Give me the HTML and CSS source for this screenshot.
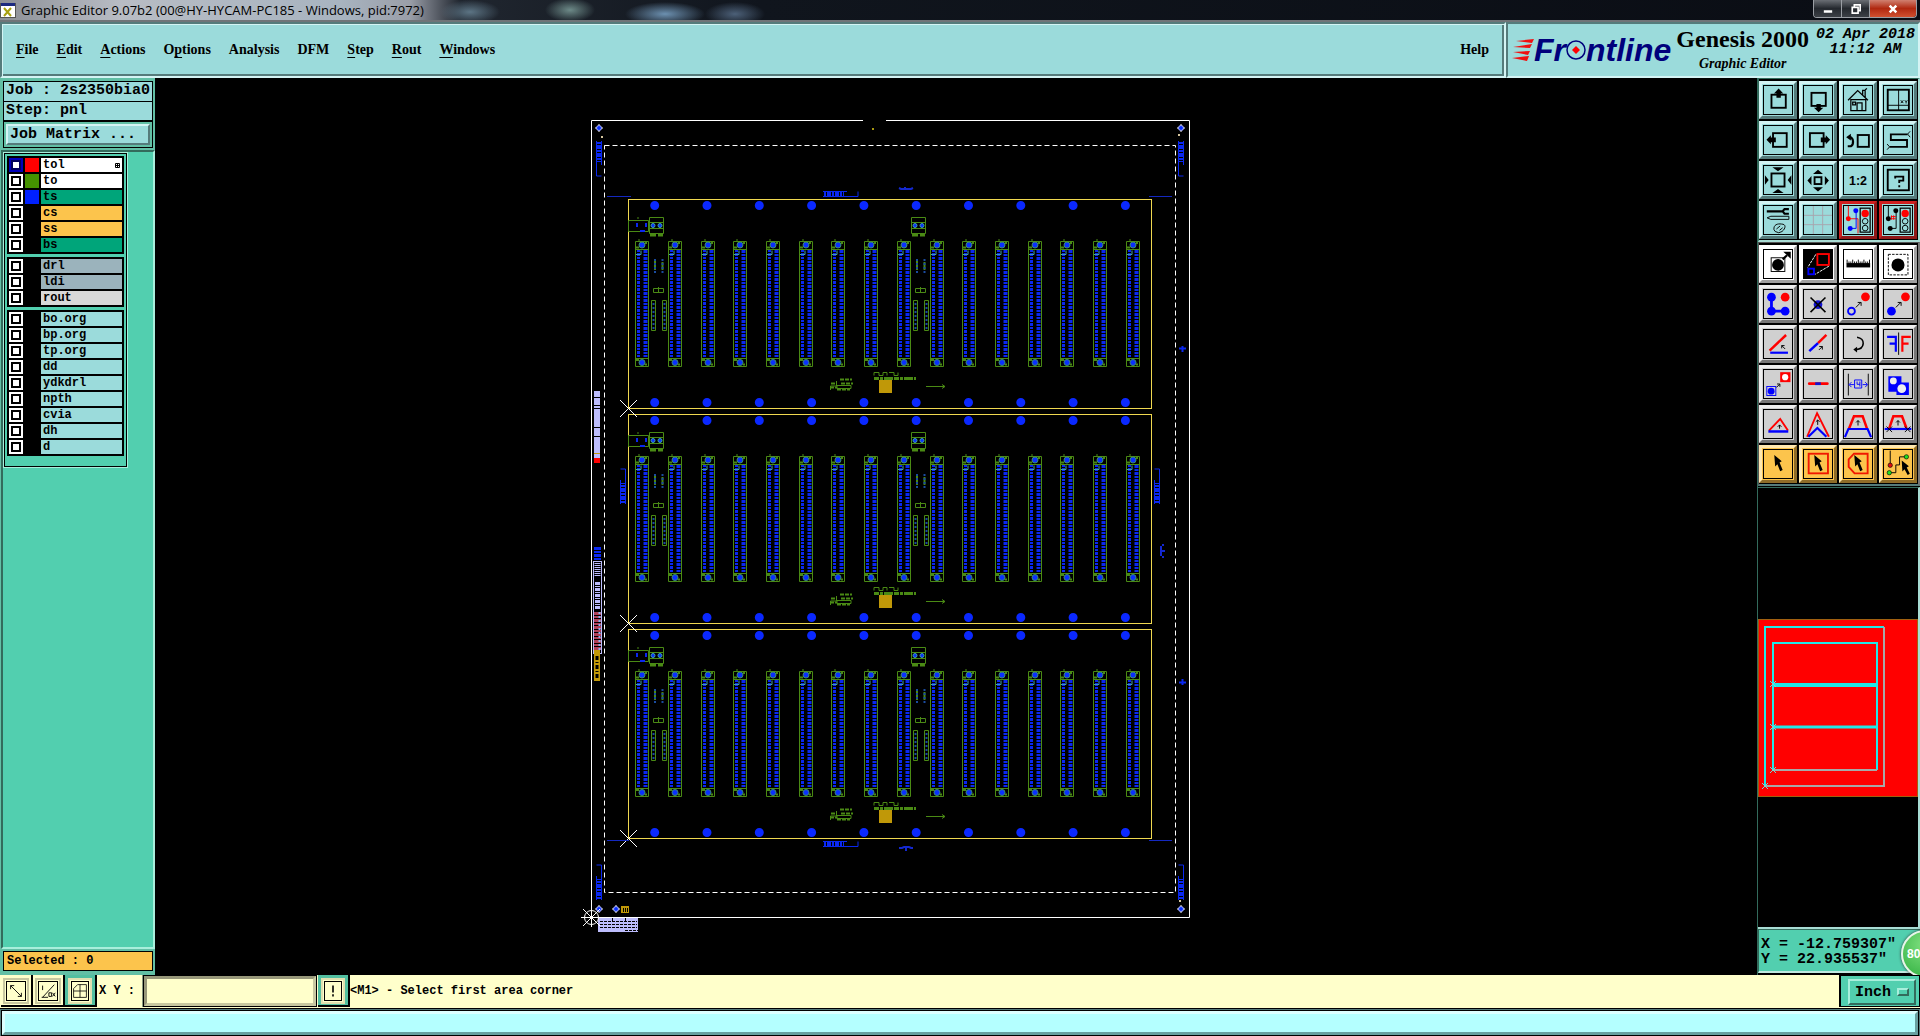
FILE: index.html
```
<!DOCTYPE html>
<html lang="en">
<head>
    <meta charset="UTF-8">
    <meta name="viewport" content="width=device-width, initial-scale=1.0">
    <title>Graphic Editor 9.07b2</title>
    <link rel="stylesheet" href="styles.css">
</head>
<body>
    <div class="titlebar">
        <svg class="app-icon" viewBox="0 0 16 16">
            <rect x="0.5" y="1.5" width="15" height="14" fill="#fff" stroke="#555"/>
            <rect x="1" y="1" width="14" height="3" fill="#1c2a80"/>
            <path d="M4 6l7 8M11 6l-7 8" stroke="#a8a010" stroke-width="2"/>
        </svg>
        <span class="title">Graphic Editor 9.07b2 (00@HY-HYCAM-PC185 - Windows, pid:7972)</span>
        <div class="window-buttons">
            <button class="win" aria-label="Minimize"><svg viewBox="0 0 12 12"><path d="M1 9h10" stroke="#fff" stroke-width="3"/></svg></button>
            <button class="win" aria-label="Restore"><svg viewBox="0 0 12 12"><path d="M4 3V1h7v7H9M1.5 4h7v7h-7z" fill="none" stroke="#fff" stroke-width="2"/></svg></button>
            <button class="win win-close" aria-label="Close"><svg viewBox="0 0 12 12"><path d="M2 2l8 8M10 2l-8 8" stroke="#fff" stroke-width="3"/></svg></button>
        </div>
    </div>

    <header class="header">
        <nav class="menu">
            <button><u>F</u>ile</button>
            <button><u>E</u>dit</button>
            <button><u>A</u>ctions</button>
            <button>O<u>p</u>tions</button>
            <button>Analysis</button>
            <button>DFM</button>
            <button><u>S</u>tep</button>
            <button><u>R</u>out</button>
            <button><u>W</u>indows</button>
            <button class="help">Help</button>
        </nav>
        <div class="brand">
            <div class="logo">
                <svg class="speed" viewBox="0 0 22 24">
                    <path d="M4 3L22 1L20 5ZM1 9L20 6L18 10ZM1 14L18 13L16 17ZM0 20L17 18L15 23Z" fill="#f01010"/>
                </svg>
                <span class="logo-text">Fr<svg class="logo-o" viewBox="0 0 20 20"><circle cx="10" cy="10" r="9" fill="none" stroke="#00007c" stroke-width="1.5"/><path d="M10 6l4 4-4 4-4-4z" fill="#f00"/></svg>ntline</span>
            </div>
            <div class="product">
                <div class="product-name">Genesis 2000</div>
                <div class="product-sub">Graphic Editor</div>
            </div>
            <div class="clock">02 Apr 2018<br>11:12 AM</div>
        </div>
    </header>

    <main class="main">
        <aside class="sidebar">
            <div class="info">
                <div class="info-row">Job : 2s2350bia0</div>
                <div class="info-row">Step: pnl</div>
            </div>
            <div class="matrix"><button class="matrix-button">Job Matrix ...</button></div>
            <div class="layer-area">
                <div class="layers">
                    <div class="layer-group">
                        <div class="layer"><input type="checkbox" id="l1" class="work"><i class="swatch red"></i><label for="l1" class="white">tol<svg class="affected" viewBox="0 0 5 5"><path d="M0.5 0.5h4v4h-4zM2.5 0v5M0 2.5h5" fill="none" stroke="#000"/></svg></label></div>
                        <div class="layer"><input type="checkbox" id="l2"><i class="swatch green"></i><label for="l2" class="white">to</label></div>
                        <div class="layer"><input type="checkbox" id="l3"><i class="swatch blue"></i><label for="l3" class="mask">ts</label></div>
                        <div class="layer"><input type="checkbox" id="l4"><i class="swatch"></i><label for="l4" class="signal">cs</label></div>
                        <div class="layer"><input type="checkbox" id="l5"><i class="swatch"></i><label for="l5" class="signal">ss</label></div>
                        <div class="layer"><input type="checkbox" id="l6"><i class="swatch"></i><label for="l6" class="mask">bs</label></div>
                    </div>
                    <div class="layer-group">
                        <div class="layer"><input type="checkbox" id="l7"><i class="swatch"></i><label for="l7" class="drill">drl</label></div>
                        <div class="layer"><input type="checkbox" id="l8"><i class="swatch"></i><label for="l8" class="drill">ldi</label></div>
                        <div class="layer"><input type="checkbox" id="l9"><i class="swatch"></i><label for="l9" class="rout">rout</label></div>
                    </div>
                    <div class="layer-group">
                        <div class="layer"><input type="checkbox" id="l10"><i class="swatch"></i><label for="l10">bo.org</label></div>
                        <div class="layer"><input type="checkbox" id="l11"><i class="swatch"></i><label for="l11">bp.org</label></div>
                        <div class="layer"><input type="checkbox" id="l12"><i class="swatch"></i><label for="l12">tp.org</label></div>
                        <div class="layer"><input type="checkbox" id="l13"><i class="swatch"></i><label for="l13">dd</label></div>
                        <div class="layer"><input type="checkbox" id="l14"><i class="swatch"></i><label for="l14">ydkdrl</label></div>
                        <div class="layer"><input type="checkbox" id="l15"><i class="swatch"></i><label for="l15">npth</label></div>
                        <div class="layer"><input type="checkbox" id="l16"><i class="swatch"></i><label for="l16">cvia</label></div>
                        <div class="layer"><input type="checkbox" id="l17"><i class="swatch"></i><label for="l17">dh</label></div>
                        <div class="layer"><input type="checkbox" id="l18"><i class="swatch"></i><label for="l18">d</label></div>
                    </div>
                </div>
            </div>
            <div class="selected">Selected : 0</div>
        </aside>

        <section class="canvas">
            <svg class="board" viewBox="155 78 1602 897">
                <defs>
                    <!-- connector -->
                    <g id="conn">
                        <path d="M0.5 0.5h13v125h-13zM0.5 8.5h13M0.5 117.5h13M4 -2v3" fill="none" stroke="#4a8a14"/>
                        <path d="M3.5 9v107" stroke="#0a28f0" stroke-width="3" stroke-dasharray="2 1 3 1"/>
                        <path d="M10.5 9v107" stroke="#0a28f0" stroke-width="4" stroke-dasharray="3 1 2 1"/>
                        <path d="M1 13.5h5v-4" fill="none" stroke="#40a0b0"/>
                        <circle cx="7" cy="4" r="3" fill="#0a30ff" stroke="#3c8c70"/>
                        <circle cx="7" cy="121.5" r="3" fill="#0a30ff" stroke="#3c8c70"/>
                        <path d="M1 6.500h3M10 2h2M1 119h3M10 123.5h2" stroke="#4a8a14" stroke-width="2"/>
                    </g>
                    <!-- parts next to a connector -->
                    <g id="parts">
                        <g fill="none" stroke="#4a8a14">
                            <path d="M20.5 18.5h14v16h-14zM20.5 23.5h14M20.5 29.5h14"/>
                            <path d="M21 36h6M29 36h5" stroke-width="3"/>
                            <path d="M26 62v9M33.5 63v8" stroke-width="2"/>
                            <path d="M24.5 89.5h10v4h-10zM29.5 88v6"/>
                            <path d="M22.5 101.5h4v30h-4zM33.5 101.5h4v30h-4z"/>
                        </g>
                        <path d="M26 60v15M33.5 60v15M24.5 104v26M35.5 104v26" stroke="#1a4ca0" stroke-width="2" stroke-dasharray="2 2"/>
                        <circle cx="24" cy="26.5" r="2" fill="#0a30ff" stroke="#40a0b0"/>
                        <circle cx="31" cy="26.5" r="2" fill="#0a30ff" stroke="#40a0b0"/>
                    </g>
                    <!-- one board of the panel -->
                    <g id="pcb">
                        <rect x="0.5" y="0.5" width="523" height="209" fill="none" stroke="#f0d850"/>
                        <path d="M26.7 6.500H499M26.7 203.5H499" stroke="#0a28ff" stroke-width="9" stroke-linecap="round" stroke-dasharray="0 52.3"/>
                        <use href="#conn" x="7" y="42"/><use href="#conn" x="40" y="42"/>
                        <use href="#conn" x="73" y="42"/><use href="#conn" x="105" y="42"/>
                        <use href="#conn" x="138" y="42"/><use href="#conn" x="171" y="42"/>
                        <use href="#conn" x="203" y="42"/><use href="#conn" x="236" y="42"/>
                        <use href="#conn" x="269" y="42"/><use href="#conn" x="302" y="42"/>
                        <use href="#conn" x="334" y="42"/><use href="#conn" x="367" y="42"/>
                        <use href="#conn" x="400" y="42"/><use href="#conn" x="432" y="42"/>
                        <use href="#conn" x="465" y="42"/><use href="#conn" x="498" y="42"/>
                        <use href="#parts" x="1"/><use href="#parts" x="263"/>
                        <path d="M0.5 21.5h20v11h-20zM10 18v2" fill="none" stroke="#4a8a14"/>
                        <path d="M9 24v4M18 24v4M12 32h5" stroke="#0a28f0" stroke-width="2"/>
                        <path d="M212 180.500h12M203 184.500h5M213 184.500h12M202 188.500h7M209 190.500h13" stroke="#4a8a14" stroke-width="2" stroke-dasharray="4 1"/>
                        <path d="M202.5 191v-4h6v-5M209 186.5h14v3h-14z" fill="none" stroke="#4a8a14"/>
                        <path d="M246 176.5v-3h5v3h4v-3h4v3M261 173.5h5v3h4v-3" fill="none" stroke="#4a8a14"/>
                        <path d="M246 179.5h42" stroke="#4a8a14" stroke-width="3" stroke-dasharray="5 1 3 1 9 1"/>
                        <rect x="251" y="181" width="13" height="13" fill="#c09808"/>
                        <path d="M298 187.5h19M314 185.5l3 2-3 2" fill="none" stroke="#4a8a14"/>
                    </g>
                    <g id="origin"><path d="M-8 -8L9 9M9 -8L-8 9" stroke="#fff"/></g>
                    <g id="tag">
                        <path d="M0 1.500h24M0 6.500h24" stroke="#0a28f0"/>
                        <path d="M1 4h20" stroke="#0a28f0" stroke-width="5" stroke-dasharray="2 1 4 1"/>
                        <path d="M24 6.500h11v-5" fill="none" stroke="#0a28f0"/>
                    </g>
                    <g id="hole"><circle r="2.5" fill="#0a30ff" stroke="#b8c0ff"/><path d="M0 -4v1M0 3v1M-4 0h1M3 0h1" stroke="#fff"/></g>
                </defs>

                <path d="M863 120.5H591.5V917.5H1189.5V120.5H886" fill="none" stroke="#fff"/>
                <rect x="604.5" y="145.5" width="571" height="747" fill="none" stroke="#fff" stroke-dasharray="5 3"/>
                <rect x="872" y="128" width="2" height="2" fill="#a89810"/>

                <use href="#pcb" x="628" y="199"/>
                <use href="#pcb" x="628" y="414"/>
                <use href="#pcb" x="628" y="629"/>
                <use href="#origin" x="628" y="408"/>
                <use href="#origin" x="628" y="623"/>
                <use href="#origin" x="628" y="838"/>

                <path d="M607 196.5h24M1149 196.5h23M607 840.5h22M1149 840.5h23" stroke="#1428c0"/>
                <use href="#tag" x="823" y="190"/>
                <use href="#tag" x="823" y="840"/>
                <use href="#tag" transform="translate(603 141) rotate(90)"/>
                <use href="#tag" transform="translate(1185 141) rotate(90)"/>
                <use href="#tag" transform="translate(595 900) rotate(-90)"/>
                <use href="#tag" transform="translate(1177 900) rotate(-90)"/>
                <use href="#tag" transform="translate(619 504) rotate(-90)"/>
                <use href="#tag" transform="translate(1153 504) rotate(-90)"/>
                <path d="M899 188l2 1h10l2-1M905 187v3M899 848h3l2-1h5l2 1h2M906 847v4M1161 546v10M1163 544v2M1163 556v2M1162 551h3" fill="none" stroke="#1428d0" stroke-width="2"/>
                <path d="M1182.5 346v6M1179 348.500h7M1182.5 679v6M1179 682.500h7" stroke="#0a28f0" stroke-width="2"/>
                <use href="#hole" x="599" y="128"/>
                <use href="#hole" x="1181" y="128"/>
                <use href="#hole" x="599" y="909"/>
                <use href="#hole" x="616" y="909"/>
                <use href="#hole" x="1181" y="909"/>
                <path d="M601 137h2M1178 135h2M1179 901h2" stroke="#d8c8a0" stroke-width="2"/>

                <!-- coupon strip on the left edge -->
                <rect x="594" y="391" width="6" height="67" fill="#bcbcfc"/>
                <path d="M594 397.5h6M594 405.5h6M594 408.5h6M594 427.5h6M594 436.5h6" stroke="#000"/>
                <path d="M594 453.5h6" stroke="#c09808"/>
                <rect x="594" y="458" width="6" height="5" fill="#f00"/>
                <path d="M597.5 547v14" stroke="#0a28f0" stroke-width="7" stroke-dasharray="3 1 2 1"/>
                <rect x="593.5" y="561.5" width="8" height="92" fill="none" stroke="#bcbcfc"/>
                <path d="M597.5 563v13" stroke="#bcbcfc" stroke-width="6" stroke-dasharray="1 1"/>
                <path d="M597.5 582v28" stroke="#bcbcfc" stroke-width="5" stroke-dasharray="3 1 1 1"/>
                <path d="M597.5 612v38" stroke="#b04058" stroke-width="7" stroke-dasharray="3 1 2 1"/>
                <path d="M599.5 612v38" stroke="#8cb4f0" stroke-width="2" stroke-dasharray="2 2"/>
                <rect x="594" y="650" width="6" height="31" fill="#c09808"/>
                <path d="M597 656v22" stroke="#000" stroke-width="3" stroke-dasharray="4 2 1 2"/>

                <rect x="621" y="906" width="8" height="7" fill="#c09808"/>
                <path d="M623.5 908v4M625.5 908v4M627.5 908v4" stroke="#000"/>
                <rect x="598" y="918" width="40" height="14" fill="#bcbcfc"/>
                <path d="M600 921.5h37M600 924.5h37M600 927.5h37M625 930.5h13" stroke="#000" stroke-dasharray="3 1"/>
                <path d="M612.5 918v3M625.5 918v3" stroke="#000"/>
                <circle cx="591.5" cy="917.5" r="7" fill="none" stroke="#fff"/>
                <use href="#origin" x="591" y="917"/>
                <path d="M581 917.5h20M591.5 908v19" stroke="#fff"/>
            </svg>
        </section>

        <aside class="tools">
            <div class="toolbox">
                <button class="tool" aria-label="Pan up"><svg viewBox="0 0 90 90"><rect x="24" y="28" width="46" height="42" fill="none" stroke="#000" stroke-width="6"/><path d="M47 8L32 24h8v14h14V24h8z"/></svg></button>
                <button class="tool" aria-label="Pan down"><svg viewBox="0 0 90 90"><rect x="24" y="22" width="46" height="42" fill="none" stroke="#000" stroke-width="6"/><path d="M47 84L32 70h8V58h14v12h8z"/></svg></button>
                <button class="tool" aria-label="Home"><svg viewBox="0 0 90 90"><path d="M13 46L44 15L77 46M22 44v35h48V44zM42 79V54h16v25M28 52h9v9h-9zM60 28V14h8v22M68 12l6-4" fill="none" stroke="#000" stroke-width="4"/></svg></button>
                <button class="tool" aria-label="Zoom window"><svg viewBox="0 0 90 90"><rect x="12" y="12" width="68" height="66" fill="none" stroke="#000" stroke-width="6"/><path d="M47 12v66M12 62h68M54 46l8 9M62 46l-8 9M67 46l4 5 4-5M71 51v5" fill="none" stroke="#000" stroke-width="3"/></svg></button>

                <button class="tool" aria-label="Pan left"><svg viewBox="0 0 90 90"><rect x="29" y="23" width="44" height="44" fill="none" stroke="#000" stroke-width="6"/><path d="M8 44L22 30v7h16v15H22v7z"/></svg></button>
                <button class="tool" aria-label="Pan right"><svg viewBox="0 0 90 90"><rect x="19" y="23" width="44" height="44" fill="none" stroke="#000" stroke-width="6"/><path d="M84 44L70 30v7H54v15h16v7z"/></svg></button>
                <button class="tool" aria-label="Previous view"><svg viewBox="0 0 90 90"><rect x="44" y="29" width="36" height="38" fill="none" stroke="#000" stroke-width="6"/><path d="M12 65h10q8-4 7-16t-13-14" fill="none" stroke="#000" stroke-width="7"/><path d="M7 36L22 25v22z"/></svg></button>
                <button class="tool" aria-label="Net path"><svg viewBox="0 0 90 90"><path d="M76 27H22v18h52v22H18" fill="none" stroke="#000" stroke-width="6"/><path d="M84 17l-8 9 8 10M10 58l8 9-8 9" fill="none" stroke="#000" stroke-width="3"/></svg></button>

                <button class="tool" aria-label="Zoom in"><svg viewBox="0 0 90 90"><rect x="24" y="24" width="42" height="42" fill="none" stroke="#000" stroke-width="6"/><path d="M27 4h36L45 17zM27 87h36L45 74zM3 30v30l12-15zM88 30v30L76 45z"/></svg></button>
                <button class="tool" aria-label="Zoom out"><svg viewBox="0 0 90 90"><rect x="34" y="36" width="22" height="22" fill="none" stroke="#000" stroke-width="6"/><path d="M45 12l16 14H29zM45 82l16-14H29zM11 47l13-15v30zM80 47L67 32v30z"/></svg></button>
                <button class="tool" aria-label="Zoom ratio"><svg viewBox="0 0 90 90"><text x="16" y="62" class="icon-text">1:2</text></svg></button>
                <button class="tool" aria-label="Query"><svg viewBox="0 0 90 90"><rect x="12" y="12" width="68" height="66" fill="none" stroke="#000" stroke-width="6"/><path d="M36 40v-6h26v13H49v8M49 62v6" fill="none" stroke="#000" stroke-width="6"/></svg></button>

                <button class="tool" aria-label="Options"><svg viewBox="0 0 90 90"><path d="M9 17h52M80 10H66l-6 7 6 8h14" fill="none" stroke="#000" stroke-width="7"/><path d="M10 38l12-5h58v10H22zM32 76c-2-16 12-20 24-18 16 0 14 14 2 24q-10 8-22 0zM40 74l12-10M50 78l10-8" fill="none" stroke="#000" stroke-width="3"/></svg></button>
                <button class="tool" aria-label="Grid"><svg viewBox="0 0 90 90"><path d="M30 0v90M60 0v90M0 30h90M0 60h90" stroke="#a8a4ac" stroke-width="3"/></svg></button>
                <button class="tool active" aria-label="Snap"><svg viewBox="0 0 90 90"><path d="M14 0v41h31v47" fill="none" stroke="#f00" stroke-width="3"/><path d="M39 15v57H20" fill="none" stroke="#00f" stroke-width="3"/><circle cx="14" cy="41" r="8" fill="#f00"/><circle cx="38" cy="15" r="8" fill="#00f"/><circle cx="20" cy="72" r="8" fill="#00f"/><rect x="52" y="7" width="32" height="77" fill="none" stroke="#000" stroke-width="4"/><circle cx="68" cy="24" r="12" fill="#f00"/><circle cx="68" cy="49" r="9" fill="none" stroke="#000" stroke-width="3"/><circle cx="68" cy="71" r="9" fill="none" stroke="#000" stroke-width="3"/></svg></button>
                <button class="tool active" aria-label="Measure nets"><svg viewBox="0 0 90 90"><path d="M14 0v41M39 15v57H20" fill="none" stroke="#000" stroke-width="3"/><path d="M22 34h16M22 41h16M24 30v14M31 30v14" stroke="#f00" stroke-width="3"/><circle cx="14" cy="41" r="8"/><circle cx="38" cy="15" r="8"/><circle cx="20" cy="72" r="8"/><rect x="52" y="7" width="32" height="77" fill="none" stroke="#000" stroke-width="4"/><circle cx="68" cy="24" r="12" fill="#f00"/><circle cx="68" cy="49" r="9" fill="none" stroke="#000" stroke-width="3"/><circle cx="68" cy="71" r="9" fill="none" stroke="#000" stroke-width="3"/></svg></button>
            </div>

            <div class="toolbox edit">
                <button class="tool pale" aria-label="Select feature"><svg viewBox="0 0 90 90"><rect x="23" y="25" width="44" height="44" fill="none" stroke="#000" stroke-width="3"/><circle cx="45" cy="48" r="19"/><path d="M60 30l14-13" stroke="#000" stroke-width="7"/><path d="M62 6h24v22z"/></svg></button>
                <button class="tool pale" aria-label="Copy area"><svg viewBox="0 0 90 90"><rect width="90" height="90"/><path d="M38 14L12 56M80 52L36 78" stroke="#fff" stroke-width="3" stroke-dasharray="9 3"/><rect x="43" y="13" width="37" height="35" fill="none" stroke="#f00" stroke-width="6"/><rect x="14" y="60" width="18" height="18" fill="none" stroke="#00f" stroke-width="6"/></svg></button>
                <button class="tool pale" aria-label="Ruler"><svg viewBox="0 0 90 90"><rect x="8" y="42" width="76" height="14"/><path d="M10 31v12M16 37v7M22 37v7M28 31v12M34 37v7M40 37v7M46 31v12M52 37v7M58 37v7M64 31v12M70 37v7M76 37v7M82 31v12" stroke="#000" stroke-width="3"/></svg></button>
                <button class="tool pale" aria-label="Select area"><svg viewBox="0 0 90 90"><rect x="14" y="14" width="63" height="66" fill="none" stroke="#000" stroke-width="3" stroke-dasharray="8 4"/><circle cx="45" cy="48" r="21"/></svg></button>

                <button class="tool gray" aria-label="Chain"><svg viewBox="0 0 90 90"><path d="M24 23v45h44" fill="none" stroke="#00f" stroke-width="9"/><circle cx="24" cy="23" r="14" fill="#00f"/><circle cx="24" cy="68" r="14" fill="#00f"/><circle cx="68" cy="68" r="14" fill="#00f"/><circle cx="68" cy="23" r="14" fill="#f00"/></svg></button>
                <button class="tool gray" aria-label="Delete"><svg viewBox="0 0 90 90"><circle cx="45" cy="47" r="14" fill="#1414d0"/><path d="M21 24l48 47M69 24L21 71" stroke="#000" stroke-width="5"/></svg></button>
                <button class="tool gray" aria-label="Move"><svg viewBox="0 0 90 90"><circle cx="69" cy="22" r="14" fill="#f00"/><circle cx="24" cy="68" r="11" fill="none" stroke="#00f" stroke-width="6"/><path d="M38 56l16-16M44 40h11v11" fill="none" stroke="#000" stroke-width="3"/></svg></button>
                <button class="tool gray" aria-label="Copy"><svg viewBox="0 0 90 90"><circle cx="69" cy="22" r="14" fill="#f00"/><circle cx="24" cy="68" r="14" fill="#00f"/><path d="M38 56l16-16M44 40h11v11" fill="none" stroke="#000" stroke-width="3"/></svg></button>

                <button class="tool gray" aria-label="Change angle"><svg viewBox="0 0 90 90"><path d="M18 66L71 16" stroke="#f00" stroke-width="8"/><path d="M20 73h57" stroke="#00f" stroke-width="7"/><path d="M68 61L57 50M57 59v-9h9" fill="none" stroke="#000" stroke-width="3"/></svg></button>
                <button class="tool gray" aria-label="Extend"><svg viewBox="0 0 90 90"><path d="M72 16L45 42" stroke="#f00" stroke-width="8"/><path d="M45 42L17 68" stroke="#00f" stroke-width="8"/><path d="M48 64l11-11M49 53h10v10" fill="none" stroke="#000" stroke-width="3"/></svg></button>
                <button class="tool gray" aria-label="Rotate"><svg viewBox="0 0 90 90"><path d="M42 23c28 4 26 38-4 40" fill="none" stroke="#000" stroke-width="5"/><path d="M30 63l12-9v18z"/></svg></button>
                <button class="tool gray" aria-label="Mirror"><svg viewBox="0 0 90 90"><path d="M47 8v72" stroke="#000" stroke-width="3"/><path d="M10 22h28v48M18 44h20" fill="none" stroke="#00f" stroke-width="7"/><path d="M86 22H59v48M59 44h20" fill="none" stroke="#f00" stroke-width="7"/></svg></button>

                <button class="tool gray" aria-label="Substitute"><svg viewBox="0 0 90 90"><rect x="52" y="7" width="33" height="32" fill="#f00"/><circle cx="68" cy="23" r="10" fill="#fff"/><rect x="9" y="53" width="29" height="29" fill="none" stroke="#00f" stroke-width="3"/><circle cx="23" cy="68" r="11" fill="#00f"/><path d="M40 56l10-10M42 45h9v9" fill="none" stroke="#000" stroke-width="3"/></svg></button>
                <button class="tool gray" aria-label="Split"><svg viewBox="0 0 90 90"><path d="M17 44h58" stroke="#f00" stroke-width="9" stroke-linecap="round"/><path d="M36 44h18" stroke="#1414d0" stroke-width="9"/></svg></button>
                <button class="tool gray" aria-label="Spacing"><svg viewBox="0 0 90 90"><path d="M14 12v70M78 12v70" stroke="#000" stroke-width="3"/><path d="M34 32h23v26H34zM42 37v9h9M51 37v16M32 47H18M24 39l-8 8 8 8M60 47h14M68 39l8 8-8 8" fill="none" stroke="#00f" stroke-width="3"/></svg></button>
                <button class="tool gray" aria-label="Merge"><svg viewBox="0 0 90 90"><path d="M14 20h42v20h24v40H40V70H14z" fill="#00f"/><circle cx="30" cy="35" r="11" fill="#eee"/><circle cx="57" cy="60" r="14" fill="#eee"/></svg></button>

                <button class="tool gray" aria-label="Stretch corner"><svg viewBox="0 0 90 90"><path d="M16 66L52 29L77 66" fill="none" stroke="#f00" stroke-width="6"/><path d="M14 69h64" stroke="#00f" stroke-width="8"/><path d="M50 60V48M44 54l6-6 6 6" fill="none" stroke="#000" stroke-width="3"/></svg></button>
                <button class="tool gray" aria-label="Move corner"><svg viewBox="0 0 90 90"><path d="M10 86L42 10L80 86" fill="none" stroke="#f00" stroke-width="6"/><path d="M14 86L43 58L72 86" fill="none" stroke="#00f" stroke-width="7"/><path d="M44 48V32M38 38l6-6 6 6" fill="none" stroke="#000" stroke-width="3"/></svg></button>
                <button class="tool gray" aria-label="Move segment"><svg viewBox="0 0 90 90"><path d="M16 60L32 20H60L74 60" fill="none" stroke="#f00" stroke-width="8"/><path d="M3 87L14 61H76L87 87" fill="none" stroke="#00f" stroke-width="7"/><path d="M45 50V34M39 40l6-6 6 6" fill="none" stroke="#000" stroke-width="3"/></svg></button>
                <button class="tool gray" aria-label="Move between"><svg viewBox="0 0 90 90"><path d="M17 58L30 20H58L72 58" fill="none" stroke="#f00" stroke-width="8"/><path d="M2 61h86" stroke="#00f" stroke-width="7"/><path d="M8 53l18 18M26 53L8 71M67 53l18 18M85 53L67 71M45 50V34M39 40l6-6 6 6" fill="none" stroke="#000" stroke-width="3"/></svg></button>

                <button class="tool gold" aria-label="Select"><svg viewBox="0 0 90 90"><path d="M33 16L57 36L50 40L60 64L52 68L43 46L36 53z"/></svg></button>
                <button class="tool gold" aria-label="Select in frame"><svg viewBox="0 0 90 90"><rect x="15" y="12" width="62" height="63" fill="none" stroke="#f01800" stroke-width="6"/><path d="M33 16L57 36L50 40L60 64L52 68L43 46L36 53z"/></svg></button>
                <button class="tool gold" aria-label="Select in polygon"><svg viewBox="0 0 90 90"><path d="M15 30L32 12H76V75H34L15 54z" fill="none" stroke="#f01800" stroke-width="6"/><path d="M33 16L57 36L50 40L60 64L52 68L43 46L36 53z"/></svg></button>
                <button class="tool gold" aria-label="Select net"><svg viewBox="0 0 90 90"><path d="M20 2v44M72 22H50v26H38v25H17" fill="none" stroke="#000" stroke-width="3"/><circle cx="20" cy="49" r="7" fill="#e01010" stroke="#000" stroke-width="2"/><circle cx="72" cy="22" r="7" fill="#20e020" stroke="#000" stroke-width="2"/><circle cx="17" cy="73" r="7" fill="#20e020" stroke="#000" stroke-width="2"/><path d="M57 34L80 52L73 56L83 76L76 80L66 62L59 69z"/></svg></button>
            </div>

            <div class="overview">
                <svg viewBox="0 0 160 178">
                    <rect x="0.5" y="0.5" width="159" height="177" fill="#f00" stroke="#a06010"/>
                    <g fill="none" stroke="#20e8e8" stroke-width="2">
                        <path d="M7 167V8H126"/>
                        <path d="M126 8V167H7" stroke="#a8a8a8"/>
                        <path d="M15 151V24H119V151"/>
                        <path d="M15 151H119" stroke="#a8a8a8"/>
                        <path d="M15 66H119" stroke-width="4"/>
                        <path d="M15 108H119" stroke-width="3"/>
                    </g>
                    <path d="M12 62l6 6M18 62l-6 6M12 105l6 6M18 105l-6 6M12 148l6 6M18 148l-6 6M4 164l6 6M10 164l-6 6" stroke="#70d8d8"/>
                </svg>
            </div>
            <div class="coords">
                <div>X = -12.759307"</div>
                <div>Y = 22.935537"</div>
                <span class="badge">80</span>
            </div>
        </aside>
    </main>

    <footer class="command">
        <button class="cmd" aria-label="Diagonal"><svg viewBox="0 0 20 20"><path d="M4 4l12 12M4 8V4h4M12 16h4v-4" fill="none" stroke="#000"/></svg></button>
        <button class="cmd" aria-label="Delta"><svg viewBox="0 0 20 20"><path d="M4 17L17 3M4 4v5M3 17h7M11 12h3v4h-3zM15 12l3 4M18 12l-3 4" fill="none" stroke="#000"/></svg></button>
        <button class="cmd raised" aria-label="Snap grid"><svg viewBox="0 0 20 20"><path d="M2 7l5-5h11v16H2V7zM10 2v16M2 10h16" fill="none" stroke="#000"/></svg></button>
        <label class="xy" for="xy">X Y :</label>
        <input class="xy-input" id="xy" type="text">
        <button class="cmd raised" aria-label="Messages"><svg viewBox="0 0 20 20"><path d="M10 3v9M10 14v3" stroke="#000" stroke-width="2"/></svg></button>
        <div class="message">&lt;M1&gt; - Select first area corner</div>
        <div class="units">
            <select class="unit-select" aria-label="Units"><option>Inch</option><option>mm</option></select>
            <i class="unit-mark"></i>
        </div>
    </footer>
    <div class="status"><div class="status-line"></div></div>
</body>
</html>
```

FILE: styles.css
```
* {
    box-sizing: border-box;
}

body {
    margin: 0;
    height: 100vh;
    display: flex;
    flex-direction: column;
    overflow: hidden;
    background: #000;
    color: #000;
    font-family: "Liberation Serif", "Times New Roman", serif;
}

button {
    margin: 0;
    padding: 0;
    border: 0;
    color: inherit;
    font: inherit;
}

svg {
    display: block;
}

/* window title */
.titlebar {
    display: flex;
    align-items: center;
    height: 22px;
    padding-right: 3px;
    background:
        radial-gradient(ellipse 30px 12px at 470px 12px, #5c7484, transparent),
        radial-gradient(ellipse 25px 12px at 570px 10px, #6d8a88, transparent),
        radial-gradient(ellipse 40px 12px at 665px 14px, #6c90b0, transparent),
        radial-gradient(ellipse 30px 12px at 735px 14px, #4c6078, transparent),
        linear-gradient(to right, #8c8f96, #b8bcc4 120px, #a8b4c0 340px, #9a9ea8 410px, #20262f 460px, #10151d 760px, #0a0d14);
    border-bottom: 2px solid #707478;
}

.app-icon {
    width: 16px;
    height: 16px;
}

.title {
    flex: 1;
    padding-left: 5px;
    font: 13px "Open Sans", "Noto Sans", sans-serif;
}

.window-buttons {
    display: flex;
    align-self: flex-start;
    height: 18px;
    border: 1px solid #9a9ea4;
    border-top: 0;
    border-radius: 0 0 4px 4px;
    overflow: hidden;
}

.win {
    display: flex;
    align-items: center;
    justify-content: center;
    width: 28px;
    background: linear-gradient(#6a6e74, #24282e 50%, #3c4046);
    border-right: 1px solid #9a9ea4;
}

.win svg {
    width: 10px;
    height: 10px;
}

.win-close {
    width: 46px;
    border-right: 0;
    background: linear-gradient(#d08070, #b02810 50%, #d05030);
}

/* menu and brand */
.header {
    display: flex;
    height: 56px;
}

.menu,
.brand {
    background: #9bdbdb;
    border: 2px solid;
    border-color: #557b7b #d4f4f4 #d4f4f4 #557b7b;
}

.menu {
    flex: 1;
    display: flex;
    align-items: center;
    gap: 18px;
    padding: 0 15px 0 14px;
    box-shadow: inset 1px 1px #d4f4f4, inset -2px -2px #557b7b;
}

.menu button {
    background: none;
    font-size: 14px;
    font-weight: bold;
}

.menu u {
    text-underline-offset: 3px;
}

.menu .help {
    margin-left: auto;
}

.brand {
    display: flex;
    width: 414px;
    padding-left: 4px;
}

.logo {
    display: flex;
    align-items: center;
    padding-right: 5px;
}

.speed {
    width: 22px;
    height: 24px;
}

.logo-text {
    display: flex;
    align-items: center;
    color: #00007c;
    font: italic bold 32px "Liberation Sans", Arial, sans-serif;
}

.logo-o {
    width: 20px;
    height: 20px;
}

.product {
    text-align: center;
    font-weight: bold;
}

.product-name {
    font-size: 24px;
    line-height: 30px;
}

.product-sub {
    font-size: 14px;
    font-style: italic;
    line-height: 20px;
}

.clock {
    flex: 1;
    padding: 3px 0 0 4px;
    text-align: center;
    white-space: nowrap;
    font: italic bold 15px/15px "Liberation Mono", "Courier New", monospace;
}

/* work area */
.main {
    flex: 1;
    display: flex;
    min-height: 0;
}

.sidebar {
    display: flex;
    flex-direction: column;
    width: 155px;
    padding: 1px 0 4px 1px;
    background: #62bfa5;
    font-family: "Liberation Mono", "Courier New", monospace;
    font-weight: bold;
}

.info {
    margin: 2px 2px 0;
    border: 1px solid #000;
}

.info-row {
    height: 19px;
    padding-left: 2px;
    background: #9bdbdb;
    font-size: 15px;
    line-height: 18px;
}

.info-row + .info-row {
    border-top: 1px solid #000;
}

.matrix {
    margin: 0 2px 2px;
    padding: 2px;
    border: 1px solid #000;
}

.matrix-button {
    width: 100%;
    height: 21px;
    padding-left: 2px;
    background: #9bdbdb;
    border: 2px solid;
    border-color: #d4f4f4 #557b7b #557b7b #d4f4f4;
    font-size: 15px;
    line-height: 16px;
    text-align: left;
}

.layer-area {
    flex: 1;
    border: 2px solid;
    border-color: #336b5c #a8efdc #a8efdc #336b5c;
    background: #52cfaf;
}

.layers {
    width: 123px;
    margin: 1px;
    padding: 2px 2px 10px;
    border: 1px solid #000;
    outline: 1px solid #a8efdc;
}

.layer-group {
    padding: 2px 2px 0;
    margin-bottom: 3px;
    background: #000;
}

.layer-group:last-child {
    margin-bottom: 0;
}

.layer {
    display: flex;
    gap: 2px;
    height: 16px;
    padding-bottom: 2px;
}

.layer input {
    appearance: none;
    width: 14px;
    height: 14px;
    margin: 0;
    border: 2px solid #fff;
    background: #fff;
    box-shadow: inset 0 0 0 2px #000;
}

.layer .work {
    border-color: #0000b8;
    box-shadow: inset 0 0 0 2px #00005c;
}

.swatch {
    width: 14px;
}

.red {
    background: #f00;
}

.green {
    background: #459200;
}

.blue {
    background: #0020ff;
}

.layer label {
    flex: 1;
    display: flex;
    align-items: center;
    justify-content: space-between;
    padding: 0 2px;
    background: #9bdbdb;
    font-size: 12px;
    line-height: 14px;
}

.layer .white {
    background: #fff;
}

.layer .mask {
    background: #00a57a;
}

.layer .signal {
    background: #fcc44c;
}

.layer .drill {
    background: #9bb3bc;
}

.layer .rout {
    background: #d8d8d8;
}

.affected {
    width: 5px;
    height: 5px;
}

.selected {
    margin: 2px 2px 0;
    height: 20px;
    padding-left: 3px;
    background: #fcc44c;
    border: 1px solid #000;
    font-size: 12px;
    line-height: 18px;
}

.canvas {
    flex: 1;
    min-width: 0;
    background: #000;
}

.board {
    width: 100%;
    height: 100%;
}

/* right column */
.tools {
    display: flex;
    flex-direction: column;
    width: 163px;
    border-left: 1px solid #336b5c;
}

.toolbox {
    display: grid;
    grid-template-columns: repeat(4, 38px);
    gap: 2px;
    padding: 2px 0 1px;
    border: 1px solid #336b5c;
    border-right: 2px solid #a8dcd4;
    border-bottom: 2px solid #a8dcd4;
}

.edit {
    border-color: #555;
    border-right-color: #777;
    border-bottom-color: #557b7b;
}

.tool {
    width: 38px;
    height: 38px;
    padding: 1px;
    background: #9bdbdb;
    border: 3px solid;
    border-color: #d4f4f4 #557b7b #557b7b #d4f4f4;
}

.tool svg {
    width: 30px;
    height: 30px;
    border: 1px solid #000;
}

.tool.active {
    border-color: #d02020 #901818 #901818 #d02020;
}

.tool.pale {
    background: #fff;
    border-color: #fff #a0a0a0 #a0a0a0 #fff;
}

.tool.gray {
    background: #d0d0d0;
    border-color: #eee #777 #777 #eee;
}

.tool.gold {
    background: #fcc44c;
    border-color: #ffe8b0 #8f6c28 #8f6c28 #ffe8b0;
}

.icon-text {
    font: bold 40px "Liberation Sans", Arial, sans-serif;
}

.overview {
    flex: 1;
    display: flex;
    align-items: center;
    margin-top: 1px;
    border-top: 1px solid #336b5c;
    border-right: 2px solid #a8dcd4;
    border-bottom: 2px solid #a8dcd4;
}

.overview svg {
    width: 160px;
    height: 178px;
}

.coords {
    position: relative;
    height: 44px;
    margin-bottom: 2px;
    padding: 7px 2px 0;
    background: #52cfaf;
    border: 1px solid #336b5c;
    border-bottom: 2px solid #c0e8e0;
    font: bold 15px/15px "Liberation Mono", "Courier New", monospace;
}

.badge {
    position: absolute;
    top: 0;
    right: -30px;
    width: 48px;
    height: 48px;
    padding-left: 4px;
    border: 2px solid #e8f4e8;
    border-radius: 50%;
    background: radial-gradient(circle at 50% 30%, #80e080, #30b040);
    box-shadow: 0 0 3px #333;
    color: #fff;
    font: bold 12px/44px "Liberation Sans", Arial, sans-serif;
}

/* command line */
.command {
    display: flex;
    height: 33px;
    padding: 0 0 1px 1px;
    background: #ffffcb;
    font-family: "Liberation Mono", "Courier New", monospace;
    font-weight: bold;
}

.cmd {
    width: 32px;
    padding: 3px;
    background: #ffffcb;
    border-right: 2px solid #000;
    border-bottom: 2px solid #000;
}

.cmd svg {
    width: 20px;
    height: 20px;
    margin: 2px auto 0;
    border: 1px solid #000;
    outline: 2px solid #c8c8a0;
    outline-offset: 1px;
}

.cmd.raised {
    background: #52bfa0;
}

.cmd.raised svg {
    width: 18px;
    background: #ffffcb;
    outline-color: #e0e0b0;
    box-shadow: 0 0 0 2px #ffffcb;
}

.xy {
    width: 46px;
    padding-left: 2px;
    font-size: 12px;
    line-height: 33px;
    border-right: 1px solid #8a9a80;
}

.xy-input {
    width: 172px;
    margin: 1px 2px 1px 1px;
    background: #ffffcb;
    border: 3px solid;
    border-color: #98987a #c8c8a0 #c8c8a0 #98987a;
    outline: 1px solid #000;
    font: inherit;
    font-size: 12px;
}

.message {
    flex: 1;
    font-size: 12px;
    line-height: 33px;
}

.units {
    position: relative;
    width: 81px;
    padding: 3px;
    padding-left: 7px;
    background: #52cfaf;
    border: 1px solid #000;
    border-left-width: 2px;
}

.unit-select {
    appearance: none;
    width: 100%;
    height: 26px;
    padding: 0 5px;
    background: #52cfaf;
    border: 2px solid;
    border-color: #a8efdc #336b5c #336b5c #a8efdc;
    border-radius: 0;
    color: #000;
    font: inherit;
    font-size: 15px;
}

.unit-mark {
    position: absolute;
    top: 12px;
    right: 10px;
    width: 12px;
    height: 8px;
    border: 2px solid;
    border-color: #a8efdc #336b5c #336b5c #a8efdc;
    pointer-events: none;
}

.status {
    height: 28px;
    padding: 2px 2px 0;
    background: #557b7b;
    border-top: 1px solid #000;
}

.status-line {
    height: 24px;
    background: #b4ffff;
    border: 3px solid;
    border-color: #dcffff #68a0a0 #68a0a0 #dcffff;
    outline: 1px solid #000;
}
```
